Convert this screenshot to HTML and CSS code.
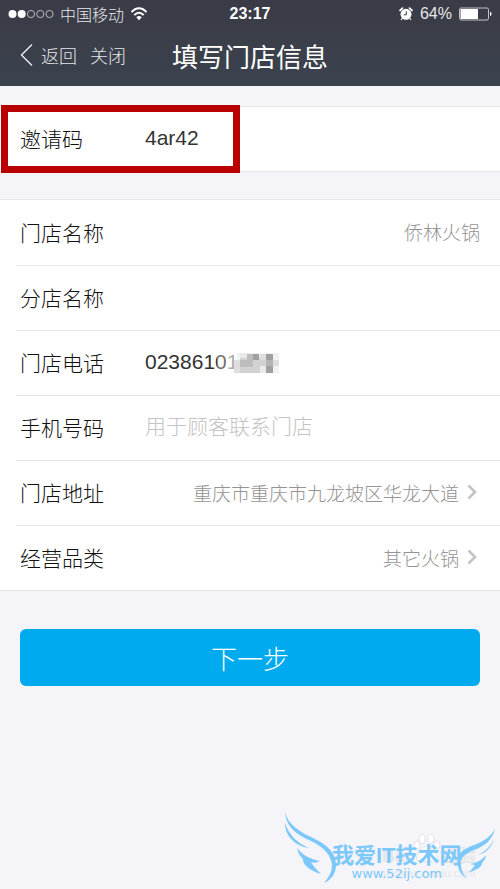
FILE: index.html
```html
<!DOCTYPE html>
<html lang="zh-CN">
<head>
<meta charset="utf-8">
<meta name="viewport" content="width=device-width, initial-scale=1">
<title>填写门店信息</title>
<link rel="stylesheet" href="styles.css">
</head>
<body>
<header class="top">
  <div class="status">
    <div class="status-side">
      <svg class="dots" width="46" height="10" viewBox="0 0 46 10" aria-hidden="true">
        <g fill="#fff"><circle cx="4.500" cy="5" r="4"/><circle cx="13.700" cy="5" r="4"/></g>
        <g fill="none" stroke="#c4c6ca" stroke-width=".9"><circle cx="23" cy="5" r="3.600"/><circle cx="32.300" cy="5" r="3.600"/><circle cx="41.500" cy="5" r="3.600"/></g>
      </svg>
      <span>中国移动</span>
      <svg class="wifi" width="18" height="14" viewBox="0 0 18 14" aria-hidden="true">
        <g fill="none" stroke="#fff" stroke-width="2"><path d="M1.500 5.200C6-.1 12-.1 16.500 5.200"/><path d="M4.300 8.200C7.200 5 10.800 5 13.700 8.200"/></g>
        <path fill="#fff" d="M6.300 10.200C8 8.700 10 8.700 11.700 10.200L9 13.200Z"/>
      </svg>
    </div>
    <strong class="clock">23:17</strong>
    <div class="status-side status-end">
      <svg width="14" height="14" viewBox="0 0 14 14" aria-hidden="true">
        <circle cx="7" cy="7.300" r="5.500" fill="#fff"/>
        <path d="M1 3.500 3.500 1.200M13 3.500 10.500 1.200" stroke="#fff" stroke-width="1.700" stroke-linecap="round"/>
        <path d="M3 11.500 2 13M11 11.500l1 1.500" stroke="#fff" stroke-width="1.200"/>
        <path d="M7.300 4.200V7.800H4.700" fill="none" stroke="#3a3d48" stroke-width="1"/>
      </svg>
      <span class="percent">64%</span>
      <svg width="33" height="14" viewBox="0 0 33 14" aria-hidden="true">
        <rect x=".5" y="1" width="29" height="12" rx="1.500" fill="none" stroke="#d0d2d5" stroke-width=".9"/>
        <rect x="1.500" y="2" width="17.500" height="10" fill="#fff"/>
        <path d="M31 4.800c2 .4 2 4 0 4.400Z" fill="#fff"/>
      </svg>
    </div>
  </div>
  <nav class="nav">
    <div class="nav-links">
      <a class="back" href="#back">
        <svg width="13" height="24" viewBox="0 0 13 24" aria-hidden="true"><path d="M12 1.500 1.500 12 12 22.500" fill="none" stroke="#e6e7e9" stroke-width="1.500"/></svg>
        返回</a>
      <a href="#close">关闭</a>
    </div>
    <h1>填写门店信息</h1>
  </nav>
</header>
<main>
  <form>
    <section class="group">
      <div class="row code">
        <label for="code">邀请码</label>
        <input id="code" type="text" value="4ar42">
        <span class="mark"></span>
      </div>
    </section>
    <section class="group">
      <div class="row">
        <label for="name">门店名称</label>
        <input class="quiet" id="name" type="text" value="侨林火锅">
      </div>
      <div class="row">
        <label for="branch">分店名称</label>
        <input id="branch" type="text">
      </div>
      <div class="row">
        <label for="tel">门店电话</label>
        <div class="phone">
          <input id="tel" type="tel" value="02386101">
          <svg class="mosaic" width="64" height="22" viewBox="0 0 64 22" shape-rendering="crispEdges" aria-hidden="true">
            <path fill="#fff" fill-opacity=".3" d="M0 0h9v22H0z"/>
            <path fill="#fff" fill-opacity=".6" d="M9 0h11v22H9z"/>
            <path fill="#f2f2f2" d="M20 1h42v20H20z"/>
            <path fill="#d2d2d2" d="M23 5h20v16H23zM43 8h6v6h-6z"/>
            <path fill="#bdbdbd" d="M23 8h13v7H23zM30 2h6v6h-6z"/>
            <path fill="#a0a0a0" d="M36 2h6v6h-6zM49 2h7v6h-7zM49 14h7v7h-7z"/>
            <path fill="#b4b4b4" d="M49 8h7v6h-7z"/>
            <path fill="#dedede" d="M17 8h6v13h-6zM43 2h6v6h-6zM56 8h6v6h-6z"/>
            <path fill="#eaeaea" d="M23 1h7v5h-7zM43 14h6v7h-6z"/>
          </svg>
        </div>
      </div>
      <div class="row">
        <label for="mobile">手机号码</label>
        <input id="mobile" type="tel" placeholder="用于顾客联系门店">
      </div>
      <div class="row">
        <label for="address">门店地址</label>
        <button class="pick" id="address" type="button">重庆市重庆市九龙坡区华龙大道
          <svg width="10" height="16" viewBox="0 0 10 16" aria-hidden="true"><path d="M1.500 1.500 8 8 1.500 14.500" fill="none" stroke="#c4c4c4" stroke-width="2.600"/></svg></button>
      </div>
      <div class="row">
        <label for="category">经营品类</label>
        <button class="pick" id="category" type="button">其它火锅
          <svg width="10" height="16" viewBox="0 0 10 16" aria-hidden="true"><path d="M1.500 1.500 8 8 1.500 14.500" fill="none" stroke="#c4c4c4" stroke-width="2.600"/></svg></button>
      </div>
    </section>
    <button class="next" type="button">下一步</button>
  </form>
</main>
<div class="watermark">
  <div class="ghost">Bai&nbsp;&nbsp;&nbsp;&nbsp;&nbsp;&nbsp;经验<small>jingyan.baidu.com</small></div>
  <svg class="wings" width="212" height="76" viewBox="0 0 212 76" aria-hidden="true">
    <g fill="#fff" stroke="#dcdce0" stroke-width=".8"><ellipse cx="133" cy="33" rx="3" ry="4"/><ellipse cx="138" cy="27" rx="3" ry="4.500"/><ellipse cx="147" cy="27" rx="3" ry="4.500"/><ellipse cx="153" cy="33" rx="3" ry="4"/><path d="M143 34c5 0 8 7 10 10 2 5-5 7-10 5-5 2-12 0-10-5 2-3 5-10 10-10Z"/></g>
    <g fill="#7cc8fb">
      <path d="M1 0C4 12 14 19 27 25C44 33 52 41 52 53C52 62 47 68 40 71C46 64 48 59 48 53C47 42 39 35 27 29C11 22 2 14 1 0Z"/>
      <path d="M1 11C5 23 13 31 25 36C12 34 1 25 1 11Z"/>
      <path d="M13 36C19 43 25 47 36 49C32 51 30 51 27 50C29 54 33 58 37 62C26 59 18 52 19 47C16 44 14 41 13 36Z"/>
      <path d="M211 17C208 28 201 34 190 38C178 43 176 47 177 54C178 60 180 64 184 67C177 63 173 57 174 49C174 40 180 37 190 33C201 29 207 24 211 17Z"/>
      <path d="M210 27C207 36 202 41 194 43C202 39 206 35 210 27Z"/>
      <path d="M202 43C198 48 193 51 186 52L191 53C189 56 187 58 185 60C193 58 198 55 198 51C200 49 202 46 202 43Z"/>
    </g>
  </svg>
  <div class="brand">我爱IT技术网<small>www.52ij.com</small></div>
</div>
</body>
</html>
```
FILE: styles.css
```css
* {
  box-sizing: border-box;
}

body {
  position: relative;
  min-height: 100vh;
  margin: 0;
  background: #f4f4f9;
  color: #111;
  font-family: "Liberation Sans", "Noto Sans CJK SC", sans-serif;
  font-size: 21px;
  font-weight: 300;
}

svg {
  display: block;
  flex: none;
}

input,
button {
  margin: 0;
  padding: 0;
  border: 0;
  background: none;
  color: inherit;
  font: inherit;
}

.top {
  height: 86px;
  background: linear-gradient(#3a3b46, #3b434e);
  color: #e6e7e9;
}

.status {
  display: grid;
  grid-template-columns: 1fr auto 1fr;
  align-items: center;
  height: 28px;
  padding: 0 8px;
  font-size: 16px;
}

.status-side {
  display: flex;
  align-items: center;
  gap: 6px;
}

.status-end {
  justify-content: flex-end;
  gap: 7px;
}

.clock {
  color: #fff;
  font-weight: 700;
}

.nav {
  display: grid;
  grid-template-columns: 1fr auto 1fr;
  align-items: center;
  height: 54px;
  padding: 0 20px;
}

.nav-links {
  display: flex;
  gap: 13px;
  font-size: 18px;
}

.nav a {
  color: inherit;
  text-decoration: none;
}

.back {
  display: flex;
  align-items: center;
  gap: 8px;
}

h1 {
  margin: 0;
  color: #fff;
  font-size: 26px;
  font-weight: 400;
}

.group {
  margin-top: 20px;
  border: solid #e6e6e9;
  border-width: 1px 0;
  background: #fff;
}

.group + .group {
  margin-top: 27px;
}

.row {
  position: relative;
  display: flex;
  align-items: center;
  height: 65px;
  margin-left: 16px;
  padding: 0 20px 2px 4px;
}

.row + .row {
  border-top: 1px solid #e6e6e6;
}

.row.code {
  height: 64px;
}

.row label {
  flex: none;
  width: 125px;
}

.row input {
  flex: 1;
  width: 100%;
  min-width: 0;
  color: #333;
  outline: 0;
}

.row .quiet {
  color: #949494;
  font-size: 19px;
  text-align: right;
}

.row input::placeholder {
  color: #c4c4c4;
  opacity: 1;
}

.mark {
  position: absolute;
  top: -2px;
  left: -15px;
  width: 239px;
  height: 68px;
  border: 7px solid #b90000;
  pointer-events: none;
}

.phone {
  position: relative;
  flex: 1;
}

.mosaic {
  position: absolute;
  top: 2px;
  left: 72px;
}

.pick {
  display: flex;
  flex: 1;
  align-items: center;
  justify-content: flex-end;
  gap: 8px;
  margin-right: 3px;
  color: #949494;
  font-size: 19px;
  white-space: nowrap;
}

.next {
  display: block;
  width: calc(100% - 40px);
  height: 57px;
  margin: 38px 20px 0;
  border-radius: 6px;
  background: #00aaef;
  color: #fff;
  font-size: 26px;
}

.watermark {
  position: absolute;
  right: 4px;
  bottom: 1px;
  width: 212px;
  height: 76px;
}

.wings {
  position: absolute;
}

.brand,
.ghost {
  position: absolute;
  top: 32px;
  left: 48px;
  color: #7cc8fb;
  font-size: 22px;
  font-weight: 700;
  line-height: 24px;
  text-align: center;
  white-space: nowrap;
}

.brand small,
.ghost small {
  display: block;
  font-family: "DejaVu Sans", sans-serif;
  font-size: 13px;
  font-weight: 400;
  line-height: 12px;
}

.ghost {
  left: 98px;
  color: #e6e6ea;
  font-size: 18px;
}

.ghost small {
  font-size: 10px;
}
```
